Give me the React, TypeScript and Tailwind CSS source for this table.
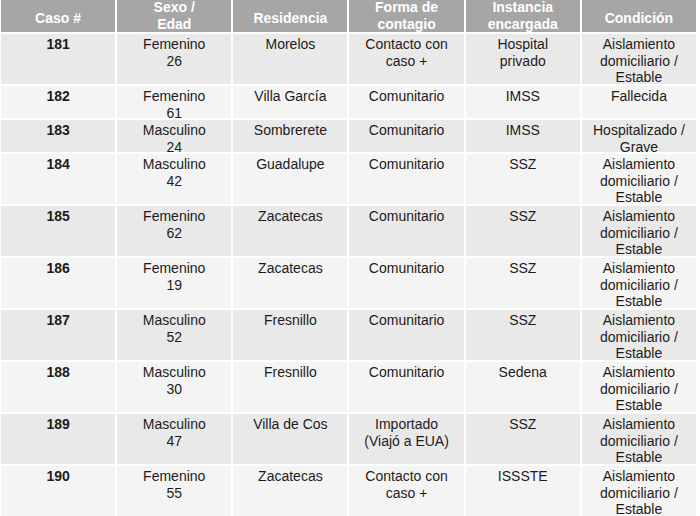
import React from 'react';

type Row = {
  caso: string;
  sexo: string[];
  residencia: string[];
  forma: string[];
  instancia: string[];
  condicion: string[];
  tall: boolean;
};

const estable = ['Aislamiento', 'domiciliario /', 'Estable'];

const rows: Row[] = [
  { caso: '181', sexo: ['Femenino', '26'], residencia: ['Morelos'], forma: ['Contacto con', 'caso +'], instancia: ['Hospital', 'privado'], condicion: estable, tall: true },
  { caso: '182', sexo: ['Femenino', '61'], residencia: ['Villa García'], forma: ['Comunitario'], instancia: ['IMSS'], condicion: ['Fallecida'], tall: false },
  { caso: '183', sexo: ['Masculino', '24'], residencia: ['Sombrerete'], forma: ['Comunitario'], instancia: ['IMSS'], condicion: ['Hospitalizado /', 'Grave'], tall: false },
  { caso: '184', sexo: ['Masculino', '42'], residencia: ['Guadalupe'], forma: ['Comunitario'], instancia: ['SSZ'], condicion: estable, tall: true },
  { caso: '185', sexo: ['Femenino', '62'], residencia: ['Zacatecas'], forma: ['Comunitario'], instancia: ['SSZ'], condicion: estable, tall: true },
  { caso: '186', sexo: ['Femenino', '19'], residencia: ['Zacatecas'], forma: ['Comunitario'], instancia: ['SSZ'], condicion: estable, tall: true },
  { caso: '187', sexo: ['Masculino', '52'], residencia: ['Fresnillo'], forma: ['Comunitario'], instancia: ['SSZ'], condicion: estable, tall: true },
  { caso: '188', sexo: ['Masculino', '30'], residencia: ['Fresnillo'], forma: ['Comunitario'], instancia: ['Sedena'], condicion: estable, tall: true },
  { caso: '189', sexo: ['Masculino', '47'], residencia: ['Villa de Cos'], forma: ['Importado', '(Viajó a EUA)'], instancia: ['SSZ'], condicion: estable, tall: true },
  { caso: '190', sexo: ['Femenino', '55'], residencia: ['Zacatecas'], forma: ['Contacto con', 'caso +'], instancia: ['ISSSTE'], condicion: estable, tall: true },
];

const headers: string[][] = [
  ['Caso #'],
  ['Sexo /', 'Edad'],
  ['Residencia'],
  ['Forma de', 'contagio'],
  ['Instancia', 'encargada'],
  ['Condición'],
];

const Lines: React.FC<{ lines: string[] }> = ({ lines }) => (
  <>
    {lines.map((l, i) => (
      <div key={i} className="whitespace-nowrap">
        {l}
      </div>
    ))}
  </>
);

const App: React.FC = () => {
  return (
    <div className="w-[700px] h-[516px] overflow-hidden bg-white pl-[1px] pr-[4px] font-['Liberation_Sans',Arial,sans-serif] text-[14px] leading-[16.5px] text-[#1c1c1c]">
      <div className="flex flex-col gap-[2px]">
        <div className="grid grid-cols-6 gap-[2px] h-[32px]">
          {headers.map((h, i) => (
            <div
              key={i}
              className={`bg-[#a6a6a6] text-white font-bold text-center overflow-hidden leading-[17px] ${
                h.length > 1 ? 'pt-0 -mt-0' : 'pt-[10px]'
              }`}
            >
              <div className={h.length > 1 ? '-mt-[1px]' : ''}>
                <Lines lines={h} />
              </div>
            </div>
          ))}
        </div>

        {rows.map((r, idx) => {
          const bg = idx % 2 === 0 ? 'bg-[#e9e9e9]' : 'bg-[#f4f4f4]';
          const cells = [[r.caso], r.sexo, r.residencia, r.forma, r.instancia, r.condicion];
          return (
            <div
              key={r.caso}
              className={`grid grid-cols-6 gap-[2px] ${r.tall ? 'h-[50px]' : 'h-[32px]'}`}
            >
              {cells.map((c, i) => (
                <div
                  key={i}
                  className={`${bg} text-center overflow-hidden pt-[2px] ${i === 0 ? 'font-bold' : ''}`}
                >
                  <Lines lines={c} />
                </div>
              ))}
            </div>
          );
        })}
      </div>
    </div>
  );
};

export default App;
